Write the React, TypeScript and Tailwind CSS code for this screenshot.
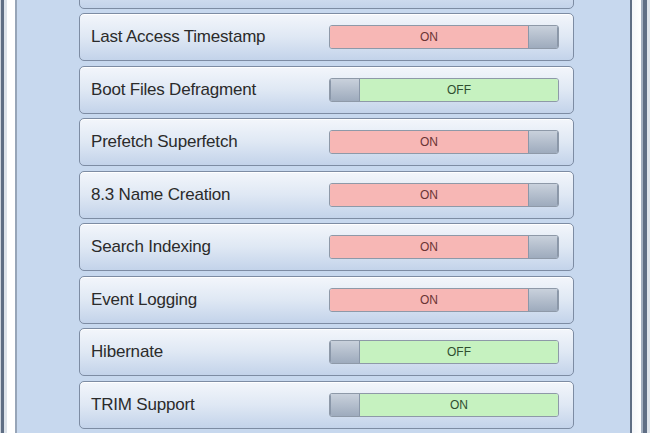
const rows: { label: string; state: string; on: boolean }[] = [
  { label: '', state: '', on: true },
  { label: 'Last Access Timestamp', state: 'ON', on: true },
  { label: 'Boot Files Defragment', state: 'OFF', on: false },
  { label: 'Prefetch Superfetch', state: 'ON', on: true },
  { label: '8.3 Name Creation', state: 'ON', on: true },
  { label: 'Search Indexing', state: 'ON', on: true },
  { label: 'Event Logging', state: 'ON', on: true },
  { label: 'Hibernate', state: 'OFF', on: false },
  { label: 'TRIM Support', state: 'ON', on: false },
  { label: '', state: '', on: true },
];

function Thumb() {
  return (
    <div className="w-[30px] h-full bg-gradient-to-b from-[#c9d1dc] to-[#9eabbd] border-x border-[#8a97a9]" />
  );
}

function Toggle({ state, on }: { state: string; on: boolean }) {
  return (
    <div className="flex w-[230px] h-[24px] rounded-[3px] border border-[#8e99a8] overflow-hidden">
      {!on && <Thumb />}
      <div
        className={
          on
            ? 'flex-1 flex items-center justify-center bg-[#f7b7b5] text-[#6b3434]'
            : 'flex-1 flex items-center justify-center bg-[#c6f2c0] text-[#2f4f2f]'
        }
      >
        <span className="text-[12px]">{state}</span>
      </div>
      {on && <Thumb />}
    </div>
  );
}

export default function App() {
  return (
    <div
      className="flex w-[650px] h-[433px] overflow-hidden"
      style={{ fontFamily: '"Liberation Sans", Arial, sans-serif' }}
    >
      <div className="w-[1px] bg-[#cdd4dd]" />
      <div className="w-[3px] bg-[#5f6e84]" />
      <div className="w-[3px] bg-[#dde3ea]" />
      <div className="w-[8px] bg-white" />
      <div className="w-[2px] bg-[#97a5b8]" />

      <div className="flex-1 bg-[#c7d8ee] pl-[62px]">
        <div className="flex flex-col gap-[4.5px] w-[495px] mt-[-39.5px]">
          {rows.map((r, i) => (
            <div
              key={i}
              className="flex items-center justify-between h-[48px] pl-[11px] pr-[14px] rounded-[5px] border border-[#7d8ca3] bg-gradient-to-b from-[#f3f6fb] via-[#dfe8f4] to-[#c3d3ea] shadow-[inset_0_1px_0_#ffffff]"
            >
              <span className="text-[17px] text-[#2b2b2b] tracking-[-0.2px]">{r.label}</span>
              {r.state && <Toggle state={r.state} on={r.on} />}
            </div>
          ))}
        </div>
      </div>

      <div className="w-[2px] bg-[#5f6e84]" />
      <div className="w-[9px] bg-gradient-to-r from-[#f4f6f9] to-white" />
      <div className="w-[2px] bg-[#a3afbf]" />
      <div className="w-[4px] bg-[#5f6e84]" />
      <div className="w-[3px] bg-[#dde3ea]" />
    </div>
  );
}
